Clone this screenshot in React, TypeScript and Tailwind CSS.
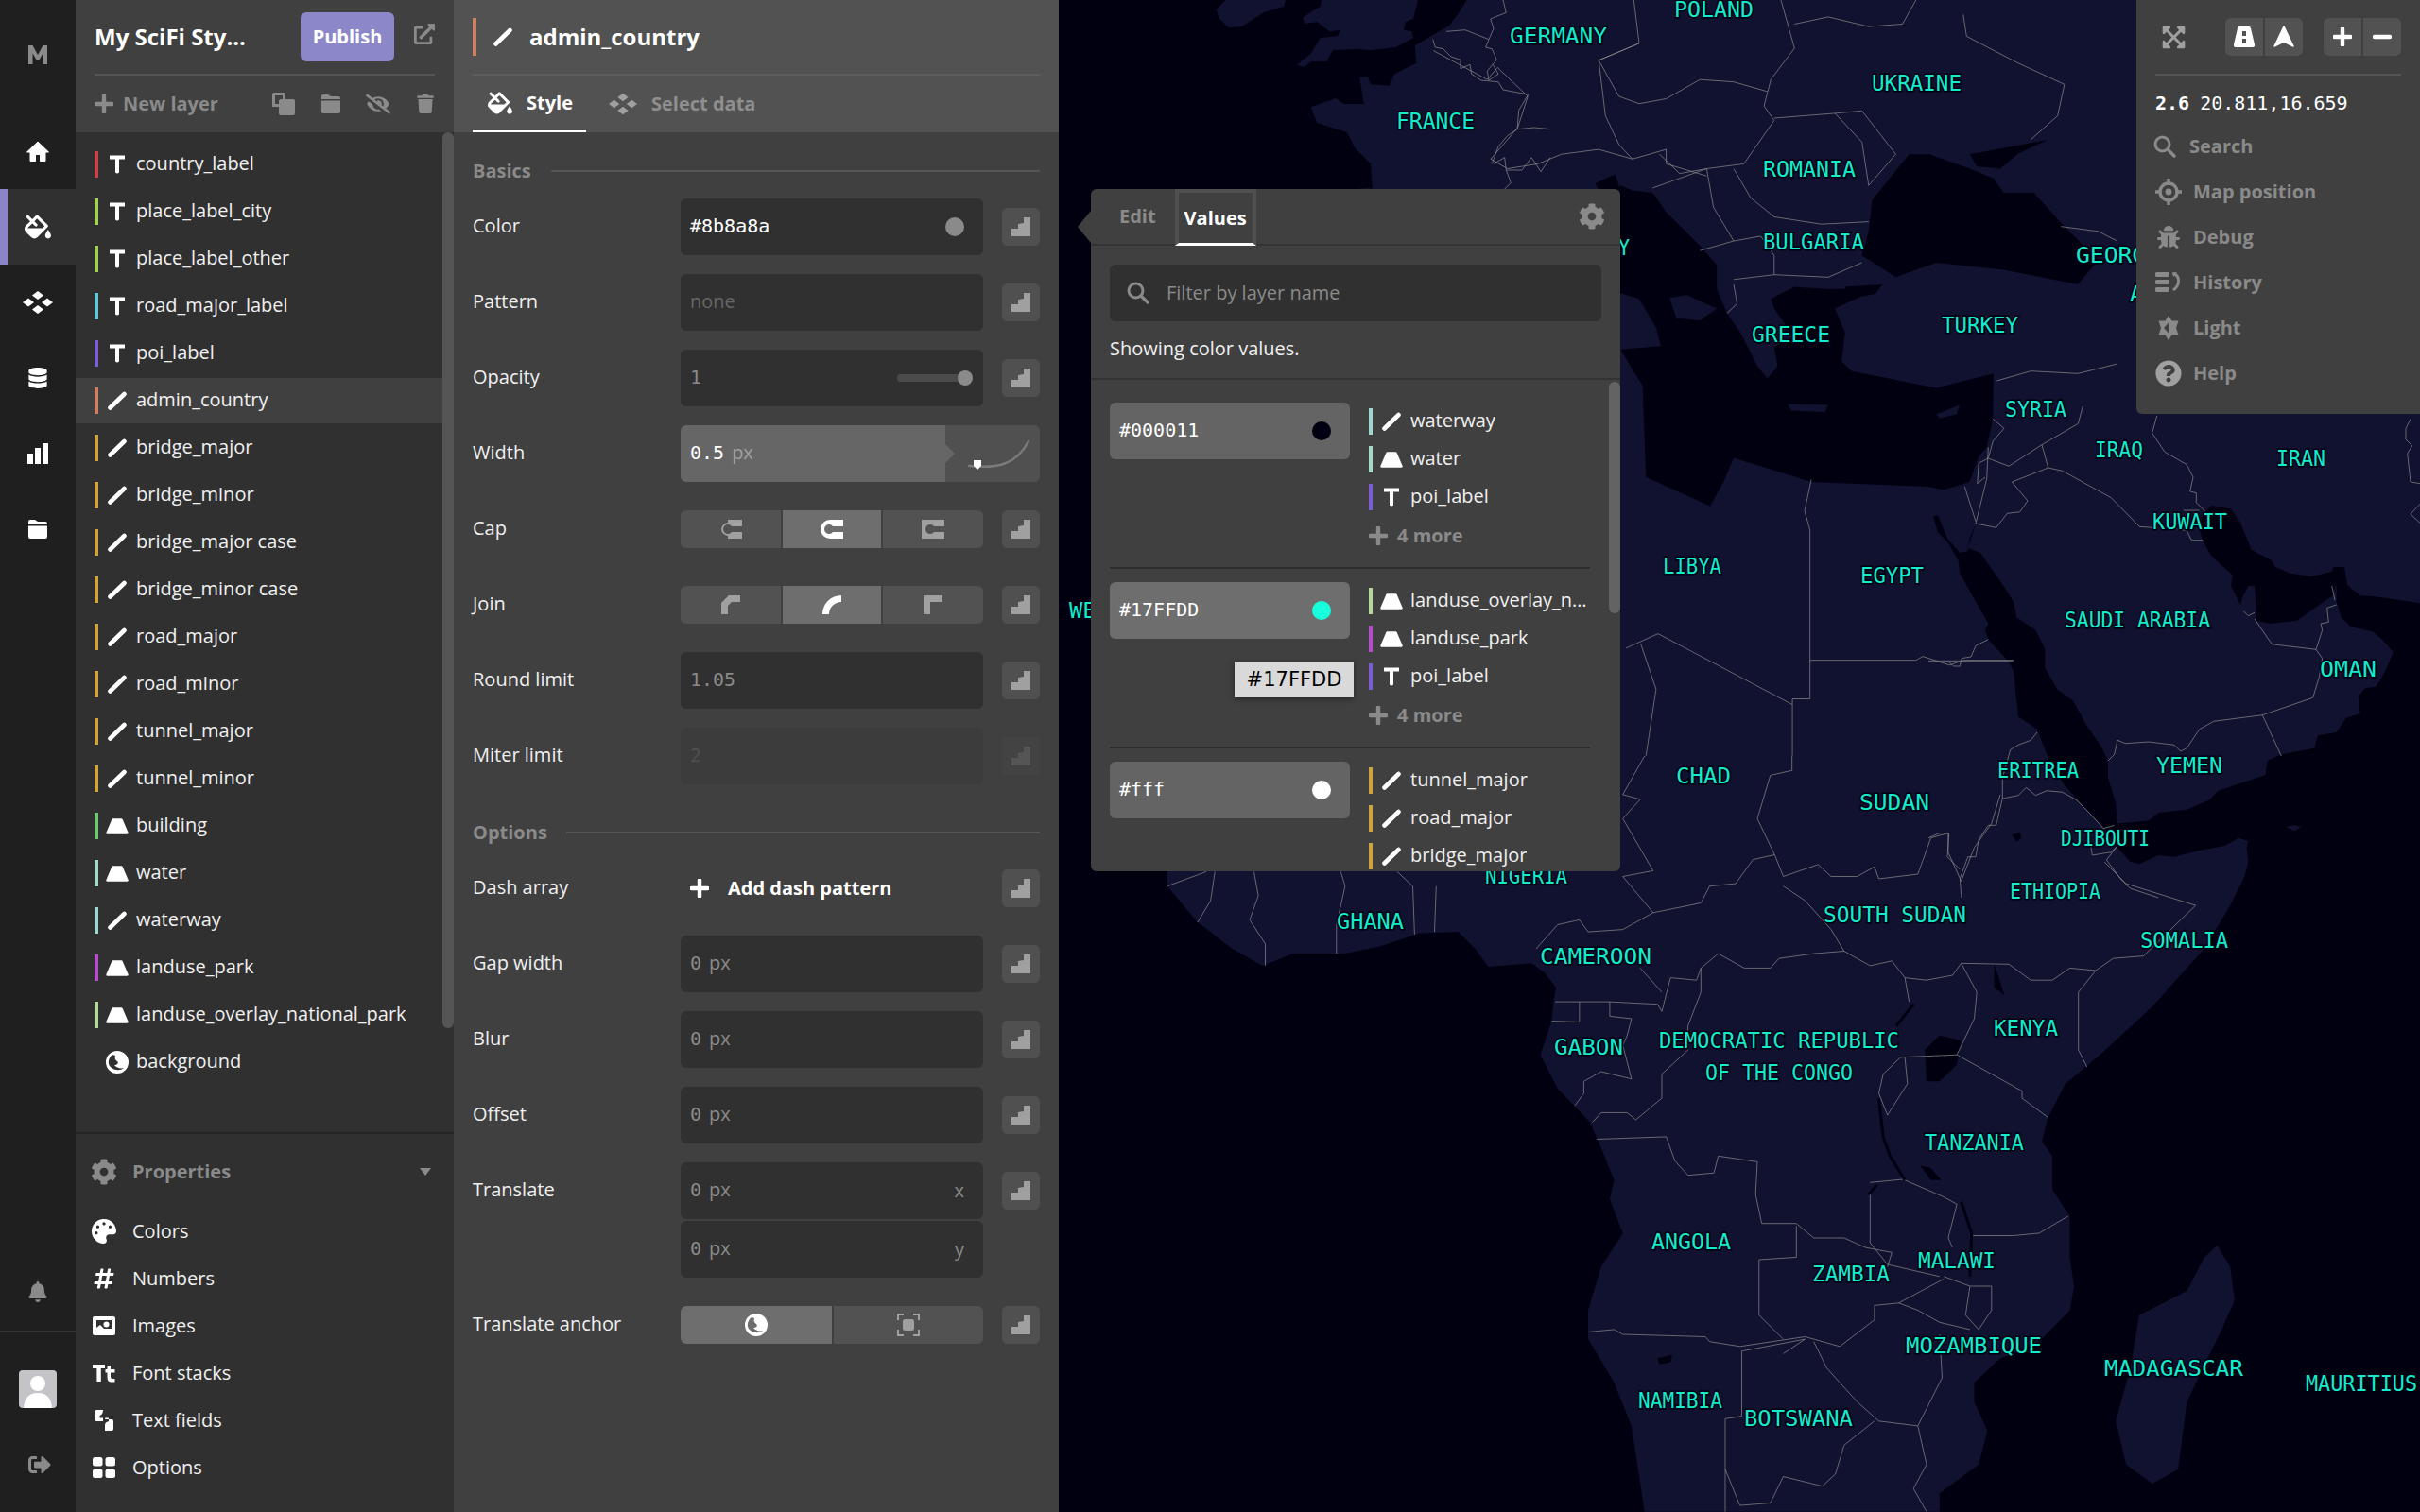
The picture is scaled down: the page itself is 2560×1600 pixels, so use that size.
import React from "react";
import {
  FaFillDrip, FaDatabase, FaBell, FaSignOutAlt, FaCog, FaPalette, FaHashtag, FaEyeSlash, FaTrash,
  FaExternalLinkAlt, FaBug, FaQuestionCircle, FaExpandArrowsAlt,
} from "react-icons/fa";

type Num = number[];
type Fn = (x: number, y: number) => [number, number];
const z9: Fn = (x, y) => [x * 0.714 + 1120, y * 0.51];
const z10: Fn = (x, y) => [x * 0.918 + 1120, 800 + y * 0.51];
const z11: Fn = (x, y) => [x / 3 + 2040, y / 3 + 430];
const z12: Fn = (x, y) => [x / 3 + 1120, y / 3];
const pg: Fn = (x, y) => [x, y];
const P = (f: Fn, a: Num) => {
  const out: string[] = [];
  for (let i = 0; i < a.length; i += 2) {
    const [x, y] = f(a[i], a[i + 1]);
    out.push(`${x.toFixed(1)},${y.toFixed(1)}`);
  }
  return out.join(" ");
};

const LAND = "#111130";
const SEA = "#000011";

const mainLand = [
  P(pg, [1552, 0]),
  P(z12, [1295, 0, 1270, 40, 1240, 80, 1130, 145, 1135, 200, 1065, 235, 1050, 272, 990, 268, 980, 243, 955, 245, 968, 330, 905, 330, 880, 312, 800, 340, 820, 390, 915, 420, 940, 470, 990, 520, 995, 600]),
  P(pg, [1448, 199, 1300, 210, 1160, 300, 1160, 900]),
  P(z10, [125, 238, 125, 270, 160, 345, 200, 400, 235, 435, 270, 410, 330, 410, 370, 395, 415, 368, 460, 365, 480, 400, 495, 437, 545, 430, 560, 450, 573, 480, 570, 510, 568, 550, 555, 620, 575, 690, 612, 760, 622, 800, 640, 880, 635, 920, 650, 990, 625, 1060, 610, 1150, 610, 1210, 640, 1300, 660, 1390, 675, 1568, 1015, 1568, 1015, 1530, 1060, 1470, 1070, 1400, 1055, 1340, 1055, 1300, 1085, 1250, 1130, 1215, 1165, 1150, 1170, 1100, 1165, 1040, 1165, 955, 1145, 900, 1145, 830, 1133, 800, 1140, 750, 1160, 680, 1200, 620, 1260, 520, 1320, 400, 1350, 310]),
  P(z11, [970, 1560, 1000, 1500, 1015, 1450, 1010, 1400, 1015, 1380, 985, 1370, 940, 1395, 860, 1410, 780, 1430, 730, 1425, 670, 1453, 640, 1445, 600, 1400, 590, 1385, 595, 1325, 700, 1315, 730, 1290, 820, 1280, 890, 1250, 920, 1220, 1070, 1170, 1075, 1125, 1120, 1105, 1225, 1085, 1235, 1045, 1295, 1035, 1325, 990, 1370, 975, 1365, 920, 1385, 895, 1420, 890, 1450, 840, 1475, 780, 1440, 740, 1410, 715, 1340, 700, 1310, 670, 1295, 620, 1295, 560, 1320, 560, 1370, 600, 1430, 605, 1560, 625]),
  P(pg, [2560, 640, 2560, 0]),
].join(" ");

const seas = [
  [P(z9, [832, 385, 850, 395, 880, 400, 900, 440, 950, 510, 975, 550, 975, 600, 990, 650, 1010, 690, 1035, 760, 1050, 785, 1065, 760, 1060, 720, 1090, 700, 1060, 640, 1055, 620, 1090, 595, 1140, 600, 1215, 598, 1150, 640, 1165, 690, 1160, 750, 1175, 770, 1230, 785, 1300, 805, 1385, 775]),
   P(z11, [205, 0, 205, 40, 185, 130, 160, 160, 130, 240, 50, 265, 0, 255]),
   P(z9, [1115, 1000, 1000, 950, 985, 1000, 965, 1050, 870, 990, 865, 800, 832, 725, 800, 600])].join(" "),
  P(z9, [795, 380, 825, 362, 832, 395, 800, 395]),
  P(z9, [1205, 415, 1260, 320, 1290, 320, 1330, 340, 1350, 350, 1385, 370, 1400, 400, 1445, 400, 1490, 470, 1540, 540, 1510, 590, 1400, 560, 1300, 545, 1240, 575, 1190, 530, 1200, 480]),
  P(z9, [1350, 320, 1465, 290, 1420, 320, 1395, 350, 1360, 345]),
  P(z9, [1165, 595, 1220, 590, 1210, 610, 1170, 620]),
  P(z11, [15, 350, 30, 345, 60, 420, 100, 465, 125, 460, 130, 420, 150, 375, 125, 450, 165, 465, 245, 580, 270, 620, 280, 670, 340, 710, 370, 770, 370, 830, 410, 900, 460, 935, 500, 1010, 545, 1075, 570, 1125, 570, 1180, 595, 1260, 600, 1330, 590, 1385, 550, 1330, 510, 1290, 430, 1200, 380, 1115, 345, 1025, 285, 985, 270, 840, 255, 810, 190, 740, 180, 710, 190, 690, 100, 530, 95, 490, 60, 430, 30, 400]),
  P(z11, [900, 315, 960, 325, 990, 370, 1025, 455, 1090, 490, 1100, 510, 1150, 530, 1215, 540, 1280, 525, 1285, 510, 1320, 510, 1330, 570, 1290, 570, 1285, 600, 1240, 630, 1170, 680, 1085, 690, 1040, 680, 1040, 640, 1035, 570, 1015, 570, 995, 610, 990, 630, 960, 570, 965, 535, 925, 500, 895, 470, 870, 425, 860, 390, 870, 340]),
  P(z10, [998, 610, 1015, 580, 1040, 590, 1035, 640, 1015, 675, 1000, 675]),
  P(z10, [1078, 430, 1085, 470, 1090, 497, 1078, 480]),
  P(z10, [993, 850, 1005, 855, 1017, 880, 1005, 880]),
  P(z10, [690, 1250, 707, 1242, 705, 1258, 692, 1262]),
  P(z11, [265, 1360, 290, 1352, 295, 1370, 280, 1382]),
];

const lands = [
  P(z12, [530, 0, 500, 30, 510, 60, 540, 88, 580, 85, 650, 40, 715, 20, 720, 0]),
  P(z12, [835, 0, 830, 20, 775, 55, 780, 75, 820, 70, 860, 100, 895, 95, 885, 115, 830, 120, 800, 170, 755, 207, 780, 212, 800, 195, 850, 195, 870, 160, 950, 155, 985, 160, 1070, 150, 1125, 120, 1120, 100, 1095, 95, 1100, 70, 1125, 60, 1140, 0]),
  P(z10, [1335, 1015, 1350, 1060, 1355, 1130, 1340, 1190, 1300, 1340, 1290, 1480, 1260, 1510, 1230, 1470, 1218, 1380, 1235, 1270, 1245, 1160, 1300, 1110, 1320, 1040]),
  P(z9, [832, 608, 860, 620, 885, 680, 892, 718, 832, 725]),
  P(z9, [905, 618, 930, 612, 975, 640, 950, 665, 915, 660]),
  P(z9, [1080, 838, 1140, 840, 1135, 855, 1085, 852]),
  P(z9, [1300, 860, 1335, 840, 1330, 860, 1305, 868]),
  P(z11, [1135, 1335, 1160, 1330, 1185, 1335, 1160, 1348]),
];

const thickDark = [
  P(z10, [985, 515, 965, 560]),
  P(z10, [945, 710, 950, 790, 958, 830, 975, 880]),
  P(z10, [1040, 925, 1052, 990, 1050, 1080]),
  P(z10, [943, 890, 933, 910]),
];

const borders = [
  P(z12, [1187, 125, 1195, 150, 1220, 155, 1245, 180, 1275, 190, 1275, 218, 1305, 205, 1310, 235, 1340, 255, 1395, 260, 1410, 285, 1490, 300, 1460, 350, 1455, 410, 1425, 430, 1395, 465, 1375, 520]),
  P(z12, [1230, 100, 1290, 95, 1365, 125, 1380, 90, 1370, 60, 1420, 40, 1410, 0]),
  P(z12, [1365, 125, 1355, 150, 1375, 155, 1390, 190, 1360, 225, 1365, 255, 1395, 235, 1378, 205]),
  P(z12, [1380, 520, 1415, 500, 1420, 540, 1470, 540, 1500, 500, 1530, 545, 1560, 500]),
  P(z12, [1455, 410, 1510, 405, 1560, 410]),
  P(z12, [1420, 540, 1435, 580, 1415, 600]),
  P(z9, [852, 0, 860, 90, 800, 125, 830, 200, 860, 215, 900, 205, 950, 165, 1000, 170, 1050, 190]),
  P(z9, [1070, 0, 1090, 100, 1055, 165, 1045, 220, 1060, 250, 1015, 340, 960, 350, 920, 360, 890, 320]),
  P(z9, [860, 90, 800, 125, 810, 240, 830, 300, 850, 330, 900, 310]),
  P(z9, [640, 330, 665, 350, 710, 340, 745, 320, 800, 310, 850, 330]),
  P(z9, [695, 200, 680, 265, 640, 330]),
  P(z9, [555, 105, 635, 165, 650, 140, 695, 200]),
  P(z9, [1090, 50, 1140, 35, 1200, 55, 1250, 50, 1270, 0]),
  P(z9, [1340, 30, 1345, 75, 1420, 130, 1490, 175, 1480, 240, 1440, 290]),
  P(z9, [1060, 245, 1150, 235, 1190, 230, 1240, 320, 1200, 385, 1190, 295, 1150, 235]),
  P(z9, [1000, 350, 1025, 410, 1060, 450, 1130, 465, 1200, 460]),
  P(z9, [880, 390, 960, 350, 970, 430, 1000, 500, 950, 520]),
  P(z9, [900, 310, 900, 340, 960, 365]),
  P(z9, [1000, 580, 1060, 570, 1140, 575, 1190, 545]),
  P(z9, [1000, 500, 1040, 490, 1060, 530, 1060, 570]),
  P(z9, [1000, 590, 1005, 630, 990, 650]),
  P(z9, [1390, 790, 1440, 770, 1510, 775, 1568, 755]),
  P(z9, [1485, 470, 1540, 480, 1568, 500]),
  P(z11, [490, 0, 475, 55, 360, 122, 255, 190, 190, 165]),
  P(z11, [360, 122, 380, 195, 265, 240, 315, 300, 290, 335, 250, 340, 215, 385, 150, 372, 185, 230, 190, 130]),
  P(z11, [205, 40, 240, 70, 205, 110, 190, 165, 160, 180, 155, 245, 180, 225]),
  P(z11, [115, 255, 150, 365]),
  P(z11, [380, 195, 425, 205, 580, 290, 670, 382, 710, 385]),
  P(z11, [725, 30, 710, 85, 750, 145, 820, 185, 840, 225, 830, 270, 850, 275, 850, 305, 880, 335]),
  P(z11, [810, 330, 860, 330]),
  P(z11, [790, 390, 820, 395, 835, 425, 870, 425]),
  P(z11, [1000, 650, 1015, 665, 1035, 655]),
  P(z11, [1035, 675, 1090, 755, 1230, 772, 1250, 800, 1240, 860, 1220, 925, 1060, 980, 905, 1000, 860, 1025, 820, 1085, 800, 1095, 780, 1075, 700, 1065, 625, 1070, 600, 1060, 590, 1105, 570, 1125]),
  P(z11, [1060, 980, 1120, 1110]),
  P(z11, [1230, 772, 1250, 710, 1245, 690, 1270, 685, 1265, 640, 1295, 630]),
  P(z11, [1280, 570, 1290, 615]),
  P(z11, [0, 808, 268, 808]),
  P(z11, [190, 740, 150, 760, 135, 795, 105, 800, 100, 825, 80, 825, 60, 808]),
  P(z11, [345, 1035, 325, 1060, 285, 1075, 260, 1090, 235, 1180, 235, 1245, 285, 1235, 310, 1210, 340, 1235, 375, 1220, 425, 1225, 470, 1250, 510, 1290, 555, 1340, 590, 1330]),
  P(z11, [565, 1440, 600, 1395, 580, 1415, 520, 1425, 515, 1395]),
  P(z11, [565, 1440, 610, 1500, 640, 1530, 730, 1560]),
  P(z11, [235, 1245, 215, 1330, 190, 1330, 160, 1375, 150, 1430, 125, 1430, 100, 1500, 105, 1560]),
  P(z11, [0, 1370, 35, 1355, 65, 1355, 60, 1430, 100, 1470]),
  P(z11, [1530, 40, 1515, 70, 1515, 105, 1535, 125, 1520, 150, 1530, 240, 1560, 245]),
  P(z11, [1560, 310, 1530, 342, 1560, 370]),
  P(z9, [1115, 995, 1105, 1060, 1113, 1100, 1113, 1450, 1087, 1450, 1087, 1568]),
  P(z9, [1087, 1462, 888, 1315, 840, 1345]),
  P(z9, [1113, 1370, 1270, 1370, 1280, 1362, 1320, 1380, 1340, 1370, 1415, 1370]),
  P(z9, [862, 1335, 885, 1430, 870, 1568]),
  P(z10, [845, 0, 845, 30, 820, 40, 805, 130, 825, 205, 800, 215, 780, 265, 750, 270, 740, 305, 685, 325, 650, 250, 685, 238, 650, 130, 670, 90, 650, 80, 675, 0]),
  P(z10, [825, 205, 835, 250, 875, 225, 890, 250, 920, 250, 940, 230, 945, 255, 990, 245, 1005, 170, 1025, 160, 1025, 200, 1040, 260, 1055, 190, 1075, 140, 1085, 80]),
  P(z10, [835, 270, 860, 300, 890, 360, 905, 405, 870, 410, 830, 420, 820, 440, 790, 440, 760, 410, 740, 440, 740, 490, 725, 560, 725, 610, 695, 660, 695, 710, 665, 755, 655, 740, 625, 740, 615, 760]),
  P(z10, [905, 405, 935, 435, 960, 425, 975, 460, 1000, 465, 1030, 455, 1040, 430, 1095, 432, 1120, 465, 1145, 465, 1165, 440, 1195, 445, 1215, 420, 1250, 415, 1310, 310, 1230, 265, 1205, 220]),
  P(z10, [1195, 445, 1175, 490, 1175, 610, 1185, 645]),
  P(z10, [1040, 430, 1058, 490, 1055, 545, 1035, 620, 970, 625, 950, 660, 945, 700, 955, 745]),
  P(z10, [975, 460, 980, 510]),
  P(z10, [1035, 620, 1110, 695, 1110, 710, 1140, 750]),
  P(z10, [975, 625, 978, 680, 955, 745]),
  P(z10, [1163, 955, 1130, 990, 1100, 995, 1050, 995]),
  P(z10, [975, 880, 1020, 915, 1035, 930, 1025, 1000, 1030, 1020]),
  P(z10, [735, 465, 705, 460, 695, 530, 690, 515, 635, 510, 572, 510]),
  P(z10, [740, 440, 735, 465]),
  P(z10, [685, 325, 650, 360, 610, 365, 600, 340, 575, 350, 550, 400]),
  P(z10, [670, 440, 695, 490]),
  P(z10, [635, 510, 635, 540, 660, 545, 655, 580, 650, 600, 660, 670, 625, 655, 605, 675, 605, 700, 595, 725]),
  P(z10, [568, 550, 600, 552, 600, 510]),
  P(z10, [620, 795, 700, 790, 710, 840, 725, 870, 755, 865, 760, 830, 805, 842, 803, 910, 810, 970, 850, 970, 870, 1000, 905, 1000, 930, 1020, 960, 1030, 955, 1060]),
  P(z10, [935, 885, 975, 878]),
  P(z10, [935, 910, 935, 1010, 955, 1055, 1015, 1080]),
  P(z10, [850, 975, 850, 1040, 807, 1045, 807, 1160, 835, 1210]),
  P(z10, [610, 1195, 640, 1190, 650, 1200, 745, 1205, 750, 1215, 785, 1225, 860, 1205, 900, 1225, 940, 1170, 940, 1140, 968, 1135, 1020, 1085]),
  P(z10, [787, 1235, 787, 1370, 768, 1375, 768, 1568]),
  P(z10, [787, 1235, 860, 1210, 835, 1240]),
  P(z10, [870, 1215, 885, 1270, 920, 1340, 945, 1380, 990, 1390, 1018, 1290, 1015, 1200]),
  P(z10, [968, 1135, 990, 1150, 1015, 1175, 1050, 1190]),
  P(z10, [990, 1390, 1000, 1470, 985, 1520, 1000, 1568]),
  P(z10, [940, 1380, 905, 1430, 895, 1490, 880, 1515, 835, 1495, 820, 1550, 785, 1555, 768, 1480]),
  P(z10, [1020, 1080, 1050, 1100, 1075, 1100, 1075, 1150, 1060, 1190]),
  P(z10, [1050, 1100, 1045, 1160, 1060, 1190]),
  P(z10, [238, 435, 238, 390, 220, 340, 230, 290, 225, 240]),
  P(z10, [160, 345, 175, 300, 180, 240]),
  P(z10, [320, 410, 320, 350, 330, 270, 325, 240]),
  P(z10, [433, 365, 435, 270]),
  P(z10, [390, 240, 408, 270, 410, 370]),
  P(z10, [125, 270, 170, 240]),
];

const labels: [string, number, number, number][] = [
  ["GERMANY", 1597, 1700, 37], ["POLAND", 1771, 1855, 9], ["UKRAINE", 1980, 2075, 87], ["FRANCE", 1477, 1560, 127],
  ["ROMANIA", 1865, 1963, 178], ["BULGARIA", 1865, 1972, 255], ["GREECE", 1853, 1936, 353], ["TURKEY", 2054, 2135, 343],
  ["GEORGIA", 2196, 2300, 269], ["ARMENIA", 2253, 2350, 310], ["SYRIA", 2121, 2186, 432], ["IRAQ", 2216, 2267, 475],
  ["IRAN", 2408, 2460, 484], ["KUWAIT", 2277, 2356, 551], ["SAUDI ARABIA", 2184, 2338, 655], ["OMAN", 2454, 2514, 707],
  ["YEMEN", 2281, 2351, 809], ["ERITREA", 2113, 2199, 814], ["DJIBOUTI", 2180, 2274, 886], ["ETHIOPIA", 2126, 2222, 942],
  ["LIBYA", 1759, 1821, 598], ["EGYPT", 1968, 2035, 608], ["WESTERN SAHARA", 1131, 1330, 645], ["ITALY", 1664, 1724, 261],
  ["CHAD", 1773, 1831, 820], ["SUDAN", 1967, 2041, 848], ["NIGERIA", 1571, 1658, 926], ["GHANA", 1414, 1485, 974],
  ["SOUTH SUDAN", 1929, 2080, 967], ["SOMALIA", 2264, 2357, 994], ["CAMEROON", 1629, 1747, 1011], ["GABON", 1644, 1717, 1107],
  ["DEMOCRATIC REPUBLIC", 1755, 2009, 1100], ["OF THE CONGO", 1804, 1960, 1134], ["KENYA", 2109, 2177, 1087],
  ["TANZANIA", 2036, 2141, 1208], ["ANGOLA", 1747, 1831, 1313], ["ZAMBIA", 1917, 1999, 1347], ["MALAWI", 2029, 2111, 1333],
  ["MOZAMBIQUE", 2016, 2160, 1423], ["MADAGASCAR", 2226, 2373, 1447], ["MAURITIUS", 2439, 2557, 1463],
  ["NAMIBIA", 1733, 1822, 1481], ["BOTSWANA", 1845, 1960, 1500],
];

function MapArt() {
  return (
    <svg className="absolute inset-0 block" width={1440} height={1600} viewBox="1120 0 1440 1600">
      <rect x={1120} y={0} width={1440} height={1600} fill={SEA} />
      <polygon points={mainLand} fill={LAND} />
      {seas.map((s, i) => <polygon key={i} points={s} fill={SEA} />)}
      {lands.map((s, i) => <polygon key={i} points={s} fill={LAND} />)}
      {borders.map((s, i) => <polyline key={i} points={s} fill="none" stroke="#8b8a8a" strokeOpacity={0.8} strokeWidth={0.9} strokeLinejoin="round" />)}
      {thickDark.map((s, i) => <polyline key={i} points={s} fill="none" stroke={SEA} strokeWidth={3} />)}
      {labels.map(([t, a, b, y]) => (
        <text key={t} x={a} y={y + 8.5} textLength={b - a} lengthAdjust="spacingAndGlyphs" fontFamily="'DejaVu Sans Mono', monospace" fontSize={23} fill="#14ebcc" stroke={SEA} strokeWidth={3} paintOrder="stroke">{t}</text>
      ))}
    </svg>
  );
}

/* ---------- icons ---------- */
type IP = { className?: string };
const Pen = ({ className = "text-white" }: IP) => (
  <svg width="20" height="20" viewBox="0 0 20 20" className={className}><line x1="2.5" y1="17.5" x2="17.5" y2="3" stroke="currentColor" strokeWidth="4.6" strokeLinecap="round" /></svg>
);
const TIcon = ({ className = "text-white" }: IP) => (
  <svg width="20" height="20" viewBox="0 0 20 20" className={className}><path d="M2 0.5H18V4.5H12V18.5Q10 20.5 8 18.5V4.5H2Z" fill="currentColor" /></svg>
);
const Fill = ({ className = "text-white" }: IP) => (
  <svg width="24" height="20" viewBox="0 0 24 20" className={className}><path d="M7.5 3.5H16.5L22.5 17.5H1.5Z" fill="currentColor" stroke="currentColor" strokeWidth="2.4" strokeLinejoin="round" /></svg>
);
const Globe = ({ className = "text-white", size = 24 }: IP & { size?: number }) => (
  <svg width={size} height={size} viewBox="0 0 24 24" className={className}>
    <path fillRule="evenodd" fill="currentColor" d="M12 0a12 12 0 1 0 0 24a12 12 0 0 0 0-24ZM5 6c-3 4-3 9 1 12c4 3 10 3 13 0c-3 1-8 0-10-3c3 0 5-2 3-4c-2-1-3-3-2-6c-2-1-4-1-5 1Z" />
  </svg>
);
const Stair = () => (
  <svg width="20" height="20" viewBox="0 0 20 20"><path d="M0 20V12H7V7L13 6V0H20V20Z" fill="currentColor" /></svg>
);
const Plus = ({ s = 20, w = 4.4 }: { s?: number; w?: number }) => (
  <svg width={s} height={s} viewBox="0 0 20 20"><path d="M10 1.5V18.5M1.5 10H18.5" stroke="currentColor" strokeWidth={w} strokeLinecap="round" /></svg>
);
const Diamonds = ({ w = 32, h = 24 }: { w?: number; h?: number }) => (
  <svg width={w} height={h} viewBox="0 0 32 24"><path d="M16 0L22 4.5L16 9L10 4.5ZM6 7.5L12 12L6 16.5L0 12ZM26 7.5L32 12L26 16.5L20 12ZM16 15L22 19.5L16 24L10 19.5Z" fill="currentColor" /></svg>
);
const Home = () => (
  <svg width="24" height="22" viewBox="0 0 24 22"><path d="M12 1L23.5 12H20V21.5H14.5V14.5H9.5V21.5H4V12H.5Z" fill="white" stroke="white" strokeWidth="1" strokeLinejoin="round" /></svg>
);
const Chart = () => (
  <svg width="22" height="22" viewBox="0 0 22 22"><path d="M0 11H6V22H0ZM8 5H14V22H8ZM16 0H22V22H16Z" fill="white" /></svg>
);
const Folder = ({ c = "white" }: { c?: string }) => (
  <svg width="20" height="20" viewBox="0 0 20 20"><path d="M0 2Q0 0 2 0H7L10 2H18Q20 2 20 4V5H0Z M0 6.5H20V18Q20 20 18 20H2Q0 20 0 18Z" fill={c} /></svg>
);
const M = () => (
  <svg width="22" height="22" viewBox="0 0 22 22"><path d="M1 21V1H5.5L11 11L16.5 1H21V21H16.5V9.5L12 17H10L5.5 9.5V21Z" fill="#8a8a8a" /></svg>
);
const Copy = () => (
  <svg width="24" height="24" viewBox="0 0 24 24"><path fillRule="evenodd" d="M2 0H14V7H22Q24 7 24 9V22Q24 24 22 24H9Q7 24 7 22V15H0V2Q0 0 2 0ZM3 3V12H7V9Q7 7 9 7H11V3Z" fill="#8a8a8a" /></svg>
);
const ImageI = () => (
  <svg width="24" height="20" viewBox="0 0 24 20"><path fillRule="evenodd" d="M2 0H22Q24 0 24 2V18Q24 20 22 20H2Q0 20 0 18V2Q0 0 2 0ZM4 4V12L8 9L12 13L20 13V4ZM14.5 5.5a3 3 0 1 1 0 6a3 3 0 0 1 0-6Z" fill="white" /></svg>
);
const TtI = () => (
  <svg width="24" height="20" viewBox="0 0 24 20"><path d="M0 1H13V5H8.8V19H4.4V5H0ZM15.5 2H19V6H23.5V9.5H19V14Q19 16 21 16H23.5V19.5H20Q15.5 19.5 15.5 15V9.5H13.5V6H15.5Z" fill="white" /></svg>
);
const Fields = () => (
  <svg width="20" height="22" viewBox="0 0 20 22"><path d="M2 0H9Q9 5 5.5 6V8.5H9V12H2Q0 12 0 10V2Q0 0 2 0ZM11 10H18Q20 10 20 12V20Q20 22 18 22H11V16Q11 13 15 12V8.5H11.5Z" fill="white" /></svg>
);
const Opts = () => (
  <svg width="24" height="22" viewBox="0 0 24 22"><rect width="10.5" height="9.5" rx="2.5" fill="white" /><rect x="13.5" width="10.5" height="9.5" rx="2.5" fill="white" /><rect y="12.5" width="10.5" height="9.5" rx="2.5" fill="white" /><rect x="13.5" y="12.5" width="10.5" height="9.5" rx="2.5" fill="white" /></svg>
);
const Search = ({ s = 24 }: { s?: number }) => (
  <svg width={s} height={s} viewBox="0 0 24 24"><circle cx="9.5" cy="9.5" r="7.5" fill="none" stroke="#8a8a8a" strokeWidth="3" /><line x1="15" y1="15" x2="22" y2="22" stroke="#8a8a8a" strokeWidth="3.4" strokeLinecap="round" /></svg>
);
const Target = () => (
  <svg width="28" height="28" viewBox="0 0 28 28"><circle cx="14" cy="14" r="9" fill="none" stroke="#8a8a8a" strokeWidth="3.4" /><circle cx="14" cy="14" r="3.4" fill="#8a8a8a" /><path d="M14 0V5M14 23V28M0 14H5M23 14H28" stroke="#8a8a8a" strokeWidth="3.4" strokeLinecap="round" /></svg>
);
const HistoryI = () => (
  <svg width="28" height="22" viewBox="0 0 28 22"><path d="M1.5 0H14V5H1.5Q0 5 0 3.5V1.5Q0 0 1.5 0ZM1.5 8H14V13H1.5Q0 13 0 11.5V9.5Q0 8 1.5 8ZM1.5 16H14V21H1.5Q0 21 0 19.5V17.5Q0 16 1.5 16Z" fill="#8a8a8a" /><path d="M18.5 1.5C26 3 27 13 19 19" fill="none" stroke="#8a8a8a" strokeWidth="3" /><path d="M18 .5L23 0L19.5 5Z" fill="#8a8a8a" /></svg>
);
const LightI = () => (
  <svg width="24" height="26" viewBox="0 0 24 26"><path fillRule="evenodd" d="M12 0L15.5 5.5H22.5L20 13L22.5 20.5H15.5L12 26L8.5 20.5H1.5L4 13L1.5 5.5H8.5ZM12 7.5L7 13L12 18.5Z" fill="#8a8a8a" /></svg>
);
const RoadI = () => (
  <svg width="24" height="24" viewBox="0 0 24 24"><path fillRule="evenodd" d="M7 1H17Q18.5 1 19 3L23 20Q23.5 23 21 23H3Q.5 23 1 20L5 3Q5.5 1 7 1ZM10 6V11H14V6ZM10 14V19H14V14Z" fill="white" /></svg>
);
const North = () => (
  <svg width="22" height="24" viewBox="0 0 22 24"><path d="M11 1L21 22L11 17L1 22Z" fill="white" stroke="white" strokeWidth="1.5" strokeLinejoin="round" /></svg>
);
const Cap = ({ kind }: { kind: number }) => {
  const d =
    kind === 0
      ? "M24 0H9V3A7.5 7.5 0 0 0 2 10A7.5 7.5 0 0 0 9 17V20H24V13H13A5 5 0 1 1 13 7H24Z"
      : kind === 1
        ? "M24 0H10A10 10 0 0 0 10 20H24V13H13A5 5 0 1 1 13 7H24Z"
        : "M24 0H0V20H24V13H13A5 5 0 1 1 13 7H24Z";
  return <svg width="24" height="20" viewBox="0 0 24 20"><path d={d} fill="currentColor" /></svg>;
};
const Join = ({ kind }: { kind: number }) => {
  const d =
    kind === 0
      ? "M0 20V8L8 0H20V7H11L7 11V20Z"
      : kind === 1
        ? "M0 20A20 20 0 0 1 20 0V7A13 13 0 0 0 7 20Z"
        : "M0 20V0H20V7H7V20Z";
  return <svg width="20" height="20" viewBox="0 0 20 20"><path d={d} fill="currentColor" /></svg>;
};
const Viewport = () => (
  <svg width="24" height="24" viewBox="0 0 24 24"><path d="M1 7V1H7M17 1H23V7M23 17V23H17M7 23H1V17" fill="none" stroke="#a0a0a0" strokeWidth="2" /><rect x="6" y="6" width="12" height="12" rx="2.5" fill="#a0a0a0" /></svg>
);

/* ---------- fragments ---------- */
const MONO = "font-['DejaVu_Sans_Mono',monospace]";

const DD = ({ disabled }: { disabled?: boolean }) => (
  <div className={`flex h-10 w-10 shrink-0 items-center justify-center rounded-md ${disabled ? "bg-[#434343] text-[#555555]" : "bg-[#505050] text-[#a0a0a0]"}`}><Stair /></div>
);

const Row = ({ label, children, dd = true, disabled }: { label: string; children: React.ReactNode; dd?: boolean; disabled?: boolean }) => (
  <div className="flex h-20 items-center">
    <div className="w-[220px] shrink-0 pb-[2px] text-[20px] leading-none text-[#f0f0f0]">{label}</div>
    {children}
    {dd && <div className="ml-5"><DD disabled={disabled} /></div>}
  </div>
);

const Input = ({ children, disabled, right }: { children: React.ReactNode; disabled?: boolean; right?: React.ReactNode }) => (
  <div className={`flex h-[60px] w-[320px] shrink-0 items-center justify-between rounded-md pl-[10px] pr-[20px] ${disabled ? "bg-[#3c3c3c]" : "bg-[#303030]"}`}>
    <div className="flex items-baseline pb-[2px]">{children}</div>
    {right}
  </div>
);

const Val = ({ v, unit, c = "text-[#8a8a8a]", uc = "text-[#8a8a8a]" }: { v: string; unit?: string; c?: string; uc?: string }) => (
  <>
    <span className={`${MONO} text-[20px] ${c}`}>{v}</span>
    {unit && <span className={`ml-[8px] text-[20px] ${uc}`}>{unit}</span>}
  </>
);

const Seg = ({ items, active, widths }: { items: React.ReactNode[]; active: number; widths: string[] }) => (
  <div className="flex h-10 w-[320px] shrink-0 gap-[2px] overflow-hidden rounded-md">
    {items.map((it, i) => (
      <div key={i} className={`flex h-10 items-center justify-center ${widths[i]} ${i === active ? "bg-[#6e6e6e] text-white" : "bg-[#525252] text-[#a0a0a0]"}`}>{it}</div>
    ))}
  </div>
);

const Section = ({ title, line }: { title: string; line: string }) => (
  <div className="flex h-10 items-center pt-[1px]">
    <span className="text-[20px] font-bold text-[#8a8a8a]">{title}</span>
    <div className={`h-[2px] flex-1 bg-[#555555] ${line}`} />
  </div>
);

const layers: [string, string, "t" | "l" | "f" | "g"][] = [
  ["country_label", "#c9424d", "t"], ["place_label_city", "#a3d158", "t"], ["place_label_other", "#a3d158", "t"],
  ["road_major_label", "#62c6d4", "t"], ["poi_label", "#7a5fd0", "t"], ["admin_country", "#cf7f64", "l"],
  ["bridge_major", "#cfa33f", "l"], ["bridge_minor", "#cfa33f", "l"], ["bridge_major case", "#cfa33f", "l"],
  ["bridge_minor case", "#cfa33f", "l"], ["road_major", "#cfa33f", "l"], ["road_minor", "#cfa33f", "l"],
  ["tunnel_major", "#cfa33f", "l"], ["tunnel_minor", "#cfa33f", "l"], ["building", "#72c772", "f"],
  ["water", "#a5d8c6", "f"], ["waterway", "#9fd6d0", "l"], ["landuse_park", "#b24fcb", "f"],
  ["landuse_overlay_national_park", "#b5d69c", "f"], ["background", "transparent", "g"],
];

const KindIcon = ({ k }: { k: string }) =>
  k === "t" ? <TIcon /> : k === "l" ? <Pen /> : k === "f" ? <Fill /> : <Globe />;

const RailItem = ({ children, active }: { children: React.ReactNode; active?: boolean }) => (
  <div className={`flex h-20 items-center justify-center ${active ? "border-l-[8px] border-[#8a85c9] bg-[#303030] pr-2" : ""}`}>{children}</div>
);

const PropItem = ({ icon, label }: { icon: React.ReactNode; label: string }) => (
  <div className="flex h-[50px] items-center">
    <div className="flex w-[60px] justify-center">{icon}</div>
    <span className="text-[20px] leading-none text-[#f0f0f0]">{label}</span>
  </div>
);

const Chip = ({ color, kind, name }: { color: string; kind: string; name: string }) => (
  <div className="flex h-10 items-center">
    <div className="h-7 w-1 shrink-0" style={{ backgroundColor: color }} />
    <div className="flex w-10 shrink-0 justify-center"><KindIcon k={kind} /></div>
    <span className="truncate pb-[2px] text-[20px] leading-none text-[#f0f0f0]">{name}</span>
  </div>
);

const ValueGroup = ({ hex, dot, chips, more = true, active }: { hex: string; dot: string; chips: [string, string, string][]; more?: boolean; active?: boolean }) => (
  <div className="relative flex gap-5">
    <div className={`flex h-[60px] w-[254px] shrink-0 items-center justify-between rounded-md pl-[10px] pr-5 ${active ? "bg-[#6e6e6e]" : "bg-[#646464]"}`}>
      <span className={`${MONO} pb-[2px] text-[20px] text-white`}>{hex}</span>
      <span className="h-5 w-5 rounded-full" style={{ backgroundColor: dot }} />
    </div>
    <div className="w-[234px]">
      {chips.map((c) => <Chip key={c[0] + c[1]} name={c[0]} color={c[1]} kind={c[2]} />)}
      {more && (
        <div className="mt-[1px] flex h-10 items-center text-[#8a8a8a]">
          <Plus s={20} />
          <span className="ml-[10px] text-[20px] font-bold leading-none">4 more</span>
        </div>
      )}
    </div>
  </div>
);

const MenuRow = ({ icon, label, pad }: { icon: React.ReactNode; label: string; pad: string }) => (
  <div className="flex h-12 items-center">
    <div className={`flex ${pad}`}>{icon}</div>
    <span className="text-[20px] font-bold leading-none text-[#8a8a8a]">{label}</span>
  </div>
);

export default function App() {
  return (
    <div className="flex h-[1600px] w-[2560px] overflow-hidden bg-[#000011] font-['Open_Sans',sans-serif]">
      {/* rail */}
      <div className="flex w-20 shrink-0 flex-col bg-[#1f1f1f]">
        <div className="flex h-[120px] items-center justify-center pb-[4px]"><M /></div>
        <RailItem><Home /></RailItem>
        <RailItem active><FaFillDrip size={28} color="white" /></RailItem>
        <RailItem><span className="text-white"><Diamonds /></span></RailItem>
        <RailItem><FaDatabase size={22} color="white" /></RailItem>
        <RailItem><Chart /></RailItem>
        <RailItem><Folder /></RailItem>
        <div className="flex-1" />
        <div className="flex h-[90px] items-center justify-center pt-[8px]"><FaBell size={22} color="#8a8a8a" /></div>
        <div className="h-[2px] bg-[#333333]" />
        <div className="flex justify-center pt-[40px]">
          <div className="h-10 w-10 overflow-hidden rounded-[4px] bg-[#c4c4c8]">
            <svg width="40" height="40" viewBox="0 0 40 40"><circle cx="20" cy="14" r="8" fill="white" /><path d="M5 40Q6 24 20 24Q34 24 35 40Z" fill="white" /></svg>
          </div>
        </div>
        <div className="flex h-[110px] items-center justify-center pt-[10px] pl-1"><FaSignOutAlt size={24} color="#8a8a8a" /></div>
      </div>

      {/* layers column */}
      <div className="flex w-[400px] shrink-0 flex-col bg-[#303030]">
        <div className="h-[140px] shrink-0 bg-[#404040] px-5">
          <div className="flex h-[80px] items-center border-b-2 border-[#555555]">
            <span className="w-[220px] text-[24px] font-bold text-white">My SciFi Sty...</span>
            <div className="flex h-[52px] w-[100px] items-center justify-center rounded-md bg-[#8b87c9] text-[20px] font-bold text-white">Publish</div>
            <div className="ml-[21px] mb-[6px]"><FaExternalLinkAlt size={22} color="#8a8a8a" /></div>
          </div>
          <div className="flex h-[60px] items-center text-[#8a8a8a]">
            <Plus s={20} />
            <span className="ml-[10px] flex-1 text-[20px] font-bold leading-none">New layer</span>
            <div className="-mr-[15px] flex w-[200px] items-center">
              <div className="flex w-[50px] justify-center"><Copy /></div>
              <div className="flex w-[50px] justify-center"><Folder c="#8a8a8a" /></div>
              <div className="flex w-[50px] justify-center"><FaEyeSlash size={26} color="#8a8a8a" /></div>
              <div className="flex w-[50px] justify-center"><FaTrash size={20} color="#8a8a8a" /></div>
            </div>
          </div>
        </div>
        <div className="relative h-[1058px] shrink-0 pt-[10px]">
          {layers.map(([n, c, k]) => (
            <div key={n} className={`mb-[2px] flex h-12 w-[388px] items-center pl-5 ${n === "admin_country" ? "bg-[#404040]" : ""}`}>
              <div className="h-7 w-1 shrink-0" style={{ backgroundColor: c }} />
              <div className="flex w-10 shrink-0 justify-center"><KindIcon k={k} /></div>
              <span className="pb-[2px] text-[20px] leading-none text-[#f0f0f0]">{n}</span>
            </div>
          ))}
          <div className="absolute right-0 top-0 h-[948px] w-3 rounded-b-md rounded-t-md bg-[#555555]" />
        </div>
        <div className="h-[2px] bg-[#252525]" />
        <div className="flex-1 pl-5 pr-5">
          <div className="flex h-[76px] items-center pt-[4px]">
            <span className="-ml-5 flex w-[60px] justify-center"><FaCog size={28} color="#8a8a8a" /></span>
            <span className="flex-1 text-[20px] font-bold leading-none text-[#8a8a8a]">Properties</span>
            <svg width="12" height="8" viewBox="0 0 12 8" className="mr-[4px]"><path d="M0 0H12L6 8Z" fill="#8a8a8a" /></svg>
          </div>
          <div className="-ml-5 pt-[2px]">
            <PropItem icon={<FaPalette size={26} color="white" />} label="Colors" />
            <PropItem icon={<FaHashtag size={24} color="white" />} label="Numbers" />
            <PropItem icon={<ImageI />} label="Images" />
            <PropItem icon={<TtI />} label="Font stacks" />
            <PropItem icon={<Fields />} label="Text fields" />
            <PropItem icon={<Opts />} label="Options" />
          </div>
        </div>
      </div>

      {/* style column */}
      <div className="flex w-[640px] shrink-0 flex-col bg-[#404040]">
        <div className="h-[140px] shrink-0 bg-[#525252] px-5">
          <div className="flex h-20 items-center border-b-2 border-[#5e5e5e]">
            <div className="h-10 w-1 bg-[#cf7f64]" />
            <div className="flex w-[56px] justify-center"><Pen /></div>
            <span className="text-[24px] font-bold leading-none text-white">admin_country</span>
          </div>
          <div className="flex h-[60px]">
            <div className="flex w-[120px] items-center justify-start gap-[15px] border-b-2 border-white pl-[16px] text-white">
              <FaFillDrip size={26} color="white" />
              <span className="text-[20px] font-bold leading-none">Style</span>
            </div>
            <div className="flex items-center text-[#a0a0a0]">
              <span className="ml-[24px] flex"><Diamonds w={30} h={24} /></span>
              <span className="ml-[15px] text-[20px] font-bold leading-none text-[#8f8f8f]">Select data</span>
            </div>
          </div>
        </div>
        <div className="px-5 pt-5">
          <Section title="Basics" line="ml-[21px]" />
          <Row label="Color"><Input right={<span className="h-5 w-5 rounded-full bg-[#8b8a8a]" />}><Val v="#8b8a8a" c="text-white" /></Input></Row>
          <Row label="Pattern"><Input><span className="text-[20px] text-[#666666]">none</span></Input></Row>
          <Row label="Opacity">
            <div className="relative">
              <Input><Val v="1" /></Input>
              <div className="absolute left-[229px] top-[26px] h-2 w-[78px] rounded-full bg-[#4a4a4a]" />
              <div className="absolute left-[293px] top-[22px] h-4 w-4 rounded-full bg-[#8a8a8a]" />
            </div>
          </Row>
          <Row label="Width" dd={false}>
            <div className="flex h-[60px] w-[380px] overflow-hidden rounded-md bg-[#505050]">
              <div className="relative flex w-[280px] items-center bg-[#666666] pb-[2px] pl-[10px]">
                <div className="flex items-baseline"><Val v="0.5" unit="px" c="text-white" uc="text-[#a0a0a0]" /></div>
                <div className="absolute -right-[10px] top-5 h-0 w-0 border-y-[10px] border-l-[10px] border-y-transparent border-l-[#666666]" />
              </div>
              <svg width="100" height="60" viewBox="0 0 100 60" className="block">
                <path d="M25 43C55 46 75 42 88 17" fill="none" stroke="#7a7a7a" strokeWidth="2.5" strokeLinecap="round" />
                <path d="M30 37H38V43L34 47L30 43Z" fill="white" />
              </svg>
            </div>
          </Row>
          <Row label="Cap"><Seg active={1} widths={["w-[106px]", "w-[104px]", "w-[106px]"]} items={[<Cap kind={0} />, <Cap kind={1} />, <Cap kind={2} />]} /></Row>
          <Row label="Join"><Seg active={1} widths={["w-[106px]", "w-[104px]", "w-[106px]"]} items={[<Join kind={0} />, <Join kind={1} />, <Join kind={2} />]} /></Row>
          <Row label="Round limit"><Input><Val v="1.05" /></Input></Row>
          <Row label="Miter limit" disabled><Input disabled><Val v="2" c="text-[#505050]" /></Input></Row>
          <div className="mt-5"><Section title="Options" line="ml-[20px]" /></div>
          <Row label="Dash array">
            <div className="flex w-[320px] items-center pl-[10px] text-white">
              <Plus s={20} />
              <span className="ml-[20px] text-[20px] font-bold leading-none">Add dash pattern</span>
            </div>
          </Row>
          <Row label="Gap width"><Input><Val v="0" unit="px" /></Input></Row>
          <Row label="Blur"><Input><Val v="0" unit="px" /></Input></Row>
          <Row label="Offset"><Input><Val v="0" unit="px" /></Input></Row>
          <div className="mt-[10px] flex items-start">
            <div className="flex h-[60px] w-[220px] shrink-0 items-center pb-[2px] text-[20px] leading-none text-[#f0f0f0]">Translate</div>
            <div className="flex flex-col gap-[2px]">
              <Input right={<span className="text-[20px] text-[#8a8a8a]">x</span>}><Val v="0" unit="px" /></Input>
              <Input right={<span className="text-[20px] text-[#8a8a8a]">y</span>}><Val v="0" unit="px" /></Input>
            </div>
            <div className="ml-5 mt-[10px]"><DD /></div>
          </div>
          <div className="mt-[30px] flex h-10 items-center">
            <div className="w-[220px] shrink-0 pb-[2px] text-[20px] leading-none text-[#f0f0f0]">Translate anchor</div>
            <Seg active={0} widths={["w-[160px]", "w-[158px]"]} items={[<Globe size={24} />, <Viewport />]} />
            <div className="ml-5"><DD /></div>
          </div>
        </div>
      </div>

      {/* map */}
      <div className="relative flex-1 overflow-hidden">
        <MapArt />

        {/* expression popover */}
        <div className="absolute left-[34px] top-[200px] h-[722px] w-[560px] rounded-md bg-[#404040]">
          <div className="absolute -left-[14px] top-[23px] h-0 w-0 border-y-[17px] border-r-[14px] border-y-transparent border-r-[#404040]" />
          <div className="flex h-[60px] items-stretch border-b-2 border-[#333333] pl-[30px] pr-[16px]">
            <span className="flex items-center text-[20px] font-bold leading-none text-[#8a8a8a]">Edit</span>
            <div className="ml-[20px] -mb-[2px] flex w-[86px] items-center justify-center border-x-[4px] border-b-[3px] border-t-[4px] border-[#505050] border-b-white text-[20px] font-bold leading-none text-white">Values</div>
            <div className="flex flex-1 items-center justify-end"><FaCog size={28} color="#8a8a8a" /></div>
          </div>
          <div className="px-5 pt-5">
            <div className="flex h-[60px] items-center rounded-md bg-[#303030] pl-[18px]">
              <Search s={24} />
              <span className="ml-[18px] text-[20px] leading-none text-[#8a8a8a]">Filter by layer name</span>
            </div>
            <div className="flex h-[60px] items-center pb-[2px] text-[20px] leading-none text-[#f0f0f0]">Showing color values.</div>
          </div>
          <div className="h-[2px] bg-[#333333]" />
          <div className="relative h-[520px] overflow-hidden pl-5 pr-8 pt-6">
            <ValueGroup hex="#000011" dot="#000011" chips={[["waterway", "#9fd6d0", "l"], ["water", "#a5d8c6", "f"], ["poi_label", "#7a5fd0", "t"]]} />
            <div className="mb-[14px] mt-[13px] h-[2px] w-[508px] bg-[#2e2e2e]" />
            <ValueGroup active hex="#17FFDD" dot="#17FFDD" chips={[["landuse_overlay_national_park", "#b5d69c", "f"], ["landuse_park", "#b24fcb", "f"], ["poi_label", "#7a5fd0", "t"]]} />
            <div className="mb-[14px] mt-[13px] h-[2px] w-[508px] bg-[#2e2e2e]" />
            <ValueGroup more={false} hex="#fff" dot="#ffffff" chips={[["tunnel_major", "#cfa33f", "l"], ["road_major", "#cfa33f", "l"], ["bridge_major", "#cfa33f", "l"]]} />
            <div className="absolute right-0 top-[2px] h-[245px] w-3 rounded-md bg-[#636363]" />
            <div className="absolute left-[152px] top-[298px] flex h-[38px] w-[126px] items-center justify-center bg-[#d9d9d9] font-['DejaVu_Sans',sans-serif] text-[21px] leading-none text-black shadow-[0_2px_6px_rgba(0,0,0,0.4)]">#17FFDD</div>
          </div>
        </div>

        {/* map toolbar */}
        <div className="absolute right-0 top-0 h-[438px] w-[300px] rounded-bl-md bg-[#404040] pl-5 pr-5">
          <div className="flex h-20 items-center border-b-2 border-[#555555]">
            <div className="flex w-[74px] pl-[6px]"><FaExpandArrowsAlt size={27} color="#a0a0a0" /></div>
            <div className="flex h-10 w-[82px] gap-[2px] overflow-hidden rounded-md">
              <div className="flex w-10 items-center justify-center bg-[#525252]"><RoadI /></div>
              <div className="flex w-10 items-center justify-center bg-[#525252]"><North /></div>
            </div>
            <div className="ml-[22px] flex h-10 w-[82px] gap-[2px] overflow-hidden rounded-md text-white">
              <div className="flex w-10 items-center justify-center bg-[#525252]"><Plus s={20} /></div>
              <div className="flex w-10 items-center justify-center bg-[#525252]"><svg width="20" height="6" viewBox="0 0 20 6"><line x1="2" y1="3" x2="18" y2="3" stroke="white" strokeWidth="4.4" strokeLinecap="round" /></svg></div>
            </div>
          </div>
          <div className={`${MONO} flex h-[60px] items-center pb-[2px] text-[20px] text-white`}>
            <span className="font-bold">2.6</span><span className="ml-[11px]">20.811,16.659</span>
          </div>
          <div className="-mt-[9px]">
            <MenuRow pad="-ml-[2px] w-[38px]" icon={<Search s={24} />} label="Search" />
            <MenuRow pad="w-[40px]" icon={<Target />} label="Map position" />
            <MenuRow pad="w-[40px] pl-[2px]" icon={<FaBug size={24} color="#8a8a8a" />} label="Debug" />
            <MenuRow pad="w-[40px]" icon={<HistoryI />} label="History" />
            <MenuRow pad="w-[40px] pl-[2px]" icon={<LightI />} label="Light" />
            <MenuRow pad="w-[40px]" icon={<FaQuestionCircle size={28} color="#a0a0a0" />} label="Help" />
          </div>
        </div>
      </div>
    </div>
  );
}
